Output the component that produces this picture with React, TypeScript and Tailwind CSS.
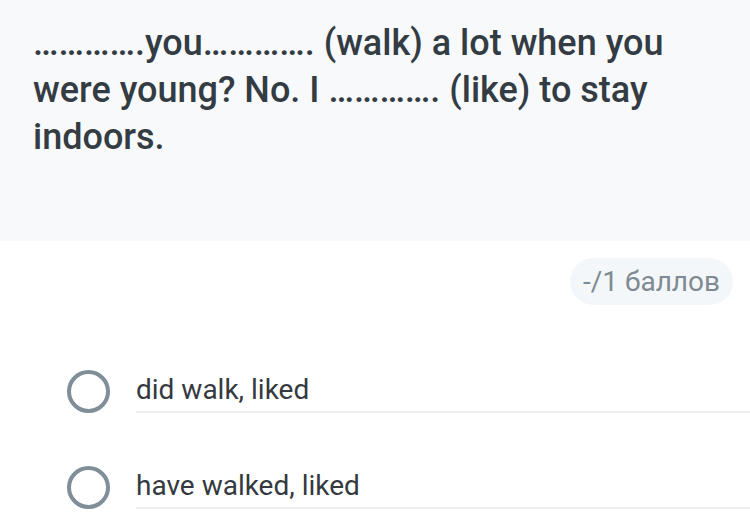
const options = ['did walk, liked', 'have walked, liked'];

export default function App() {
  return (
    <div className="w-[750px] h-[528px] overflow-hidden bg-white font-['Roboto',sans-serif]">
      <div className="bg-[#f7f9fb] px-[33px] pt-[20px] pb-[80px]">
        <p className="max-w-[690px] text-[36px] leading-[47px] font-medium text-[#343c43]">
          ………….you…………. (walk) a lot when you were young? No. I …………. (like) to stay indoors.
        </p>
      </div>

      <div className="flex justify-end pt-[17px] pr-[17px]">
        <span className="rounded-full bg-[#f4f7f9] px-[13px] h-[47px] flex items-center text-[28px] text-[#7f8a93]">
          -/1 баллов
        </span>
      </div>

      <div className="flex flex-col gap-[53px] pt-[65px]">
        {options.map((o) => (
          <label key={o} className="flex items-start pl-[67px]">
            <span className="w-[43px] h-[43px] shrink-0 rounded-full border-[4px] border-[#7f8e99]" />
            <span className="ml-[26px] flex-1 pt-[3px] pb-[5px] border-b-2 border-[#eceef0] text-[28px] leading-[33px] text-[#343a40]">
              {o}
            </span>
          </label>
        ))}
      </div>
    </div>
  );
}
